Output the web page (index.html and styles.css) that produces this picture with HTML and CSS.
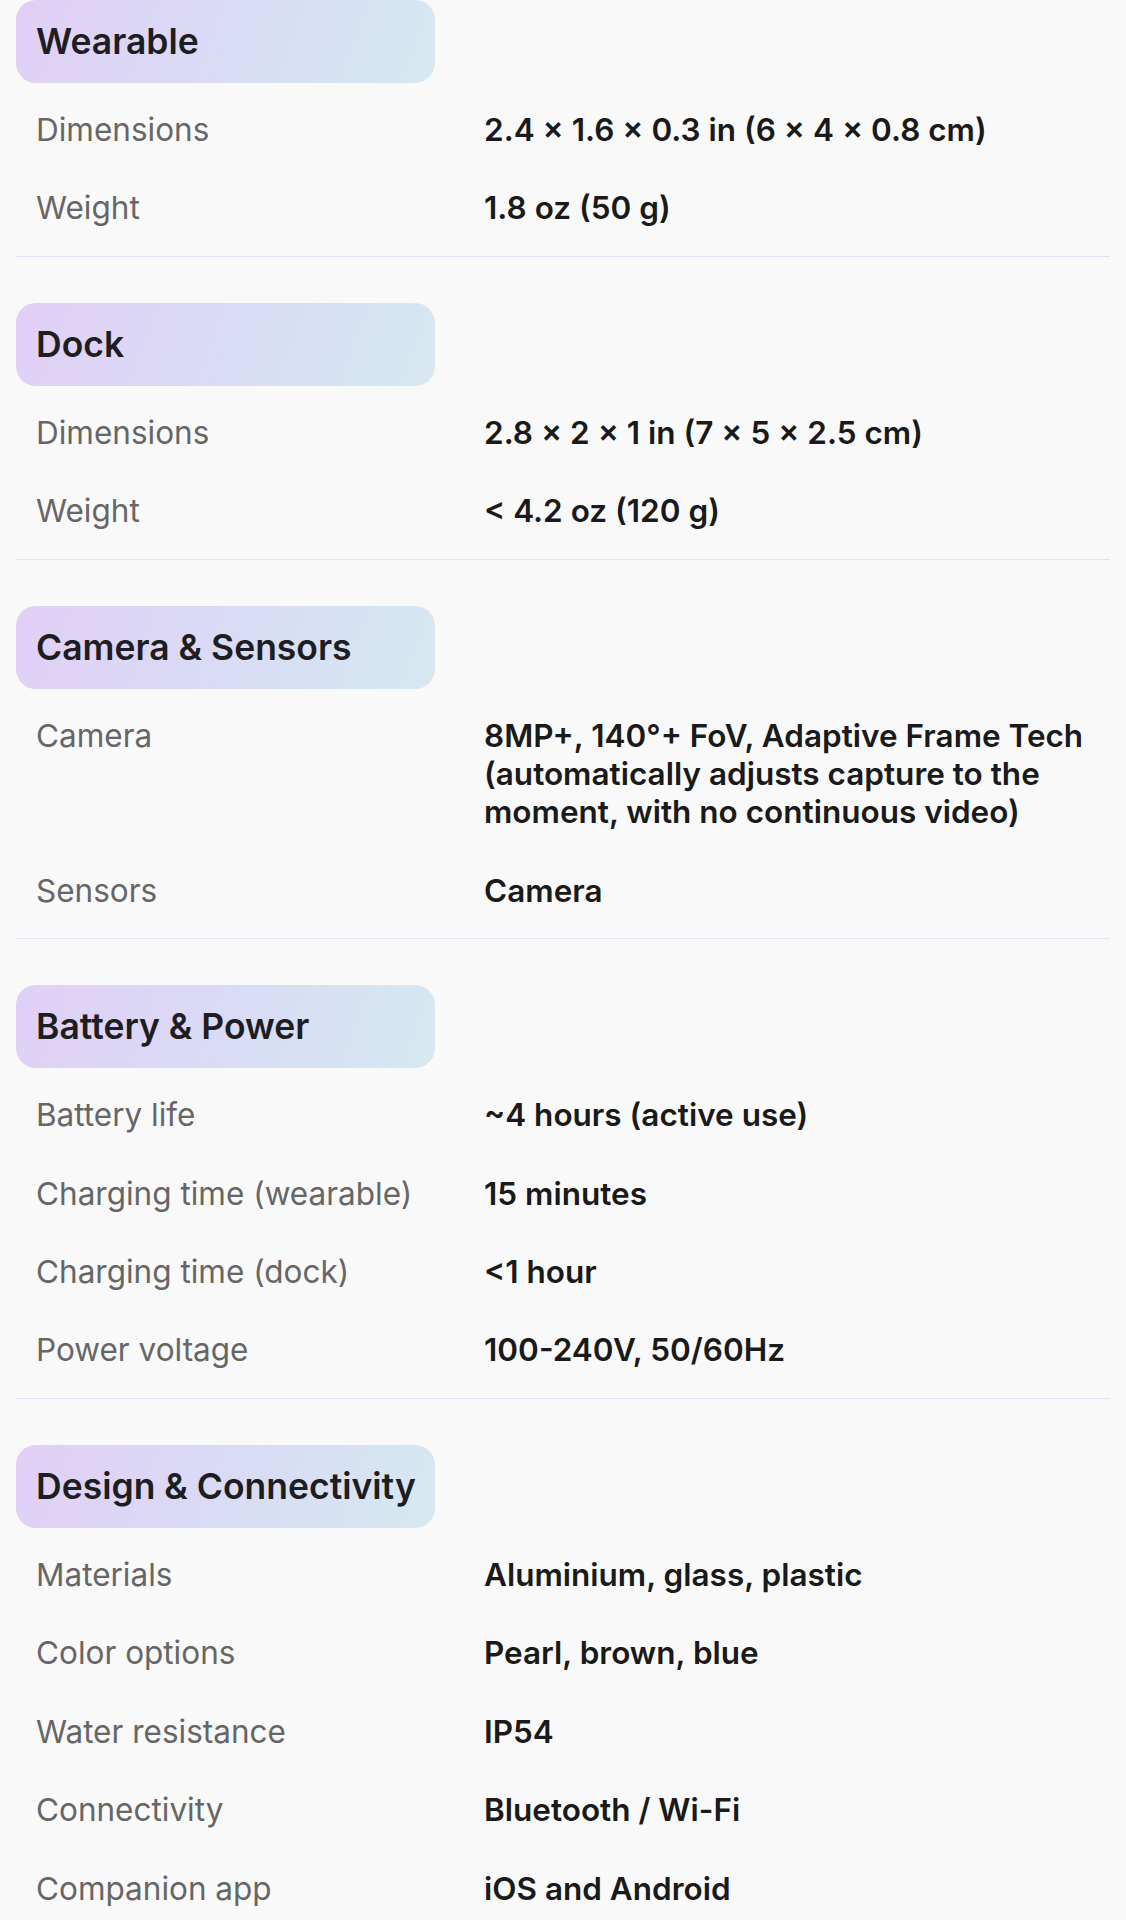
FILE: index.html
```html
<!DOCTYPE html>
<html>
<head>
<meta charset="UTF-8">
<title>Specs</title>
<link rel="stylesheet" href="styles.css">
</head>
<body>
<div id="specs">
    <section class="spec-group">
        <h2 class="group-title">Wearable</h2>
        <div class="spec-row"><span class="spec-label">Dimensions</span><span class="spec-value">2.4 × 1.6 × 0.3 in (6 × 4 × 0.8 cm)</span></div>
        <div class="spec-row"><span class="spec-label">Weight</span><span class="spec-value">1.8 oz (50 g)</span></div>
    </section>

    <section class="spec-group">
        <h2 class="group-title">Dock</h2>
        <div class="spec-row"><span class="spec-label">Dimensions</span><span class="spec-value">2.8 × 2 × 1 in (7 × 5 × 2.5 cm)</span></div>
        <div class="spec-row"><span class="spec-label">Weight</span><span class="spec-value">&lt; 4.2 oz (120 g)</span></div>
    </section>

    <section class="spec-group">
        <h2 class="group-title">Camera &amp; Sensors</h2>
        <div class="spec-row"><span class="spec-label">Camera</span><span class="spec-value">8MP+, 140°+ FoV, Adaptive Frame Tech (automatically adjusts capture to the moment, with no continuous video)</span></div>
        <div class="spec-row"><span class="spec-label">Sensors</span><span class="spec-value">Camera</span></div>
    </section>

    <section class="spec-group">
        <h2 class="group-title">Battery &amp; Power</h2>
        <div class="spec-row"><span class="spec-label">Battery life</span><span class="spec-value">~4 hours (active use)</span></div>
        <div class="spec-row"><span class="spec-label">Charging time (wearable)</span><span class="spec-value">15 minutes</span></div>
        <div class="spec-row"><span class="spec-label">Charging time (dock)</span><span class="spec-value">&lt;1 hour</span></div>
        <div class="spec-row"><span class="spec-label">Power voltage</span><span class="spec-value">100-240V, 50/60Hz</span></div>
    </section>

    <section class="spec-group last">
        <h2 class="group-title">Design &amp; Connectivity</h2>
        <div class="spec-row"><span class="spec-label">Materials</span><span class="spec-value">Aluminium, glass, plastic</span></div>
        <div class="spec-row"><span class="spec-label">Color options</span><span class="spec-value">Pearl, brown, blue</span></div>
        <div class="spec-row"><span class="spec-label">Water resistance</span><span class="spec-value">IP54</span></div>
        <div class="spec-row"><span class="spec-label">Connectivity</span><span class="spec-value">Bluetooth / Wi-Fi</span></div>
        <div class="spec-row"><span class="spec-label">Companion app</span><span class="spec-value">iOS and Android</span></div>
    </section>
</div>
</body>
</html>
```

FILE: styles.css
```css
body {
    margin: 0;
    background-color: #F9F9F9;
    font-family: Inter, "Noto Sans", sans-serif;
    color: #1C1C1E;
}

#specs {
    padding: 0 16px 0 16px;
}

.spec-group {
    border-bottom: 1px solid #E3E3F4;
    padding-bottom: 8px;
    margin-bottom: 46px;
}

.spec-group.last {
    border-bottom: none;
}

.group-title {
    width: 419px;
    box-sizing: border-box;
    margin: 0 0 8px 0;
    padding: 20px 10px 20px 20px;
    border-radius: 20px;
    background: linear-gradient(110deg, #E1CFF6 0%, #DADAF5 45%, #D5E6F2 90%, #D8E9F1 100%);
    font-size: 35.5px;
    line-height: 43px;
    font-weight: 600;
    white-space: nowrap;
    color: #1E1E22;
}

.spec-row {
    display: grid;
    grid-template-columns: 448px 1fr;
    padding: 20px 4px 20px 20px;
    font-size: 31.5px;
    line-height: 38.4px;
}

.spec-label {
    color: #666666;
    font-weight: 400;
}

.spec-value {
    color: #1A1A1A;
    font-weight: 600;
}
```
